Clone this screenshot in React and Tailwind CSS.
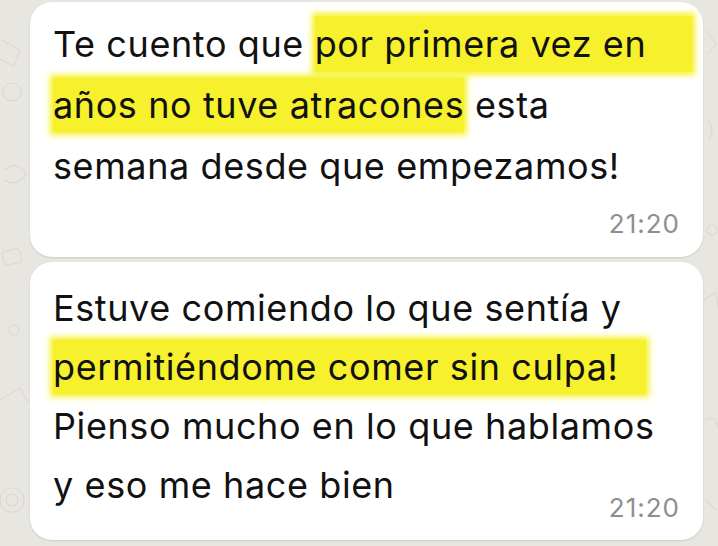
import React from "react";

const hl = "bg-[#f6f12c] shadow-[0_0_6px_3px_#f6f12c] [box-decoration-break:clone]";

function Time() {
  return (
    <div className="text-[26px] leading-[30px] tracking-[1px] text-[#8e8e8e]">21:20</div>
  );
}

function Doodles() {
  return (
    <svg className="absolute inset-0 w-full h-full" viewBox="0 0 718 546" fill="none" stroke="#dcd9d3" strokeWidth="1.2">
      <circle cx="12" cy="92" r="9" />
      <path d="M2 40 l18 10 l-6 16 l-16 -8" />
      <path d="M4 170 q14 -10 22 4 q-8 14 -22 6" />
      <rect x="3" y="250" width="18" height="14" rx="3" transform="rotate(-15 12 257)" />
      <circle cx="14" cy="330" r="5" />
      <path d="M0 400 l20 -12 l8 14" />
      <circle cx="12" cy="500" r="12" />
      <circle cx="12" cy="500" r="6" />
      <path d="M706 30 l10 14 l-8 10" />
      <path d="M708 120 q8 10 0 20" />
      <circle cx="712" cy="230" r="5" />
      <path d="M704 300 l12 -8 l2 16" />
      <path d="M706 420 q10 -6 12 8" />
      <path d="M706 500 l10 10" />
    </svg>
  );
}

export default function App() {
  return (
    <div className="relative w-[718px] h-[546px] overflow-hidden bg-[#e8e6e1] font-['Inter','Liberation_Sans',sans-serif]">
      <Doodles />
      <div className="relative flex flex-col gap-[5px] pl-[30px] pr-[15px] pt-[2px]">
        <div className="rounded-[22px] bg-white shadow-[0_1px_2px_rgba(0,0,0,0.12)] pl-[23px] pr-[23px] pt-[12px] pb-[18px] text-[36px] leading-[61px] tracking-[0.6px] text-[#111] whitespace-nowrap">
          <div>
            Te cuento que <span className={`${hl} py-[6px] pr-[46px]`}>por primera vez en</span>
          </div>
          <div>
            <span className={`${hl} py-[5px]`}>años no tuve atracones</span> esta
          </div>
          <div>semana desde que empezamos!</div>
          <div className="flex justify-end mt-[12px]">
            <Time />
          </div>
        </div>
        <div className="rounded-[22px] bg-white shadow-[0_1px_2px_rgba(0,0,0,0.12)] pl-[23px] pr-[23px] pt-[17px] pb-[17px] text-[36px] leading-[59px] tracking-[0.6px] text-[#111] whitespace-nowrap">
          <div>Estuve comiendo lo que sentía y</div>
          <div>
            <span className={`${hl} py-[5px] pr-[28px]`}>permitiéndome comer sin culpa!</span>
          </div>
          <div>Pienso mucho en lo que hablamos</div>
          <div className="flex justify-between items-start">
            <div>y eso me hace bien</div>
            <div className="mt-[37px]">
              <Time />
            </div>
          </div>
        </div>
      </div>
    </div>
  );
}
